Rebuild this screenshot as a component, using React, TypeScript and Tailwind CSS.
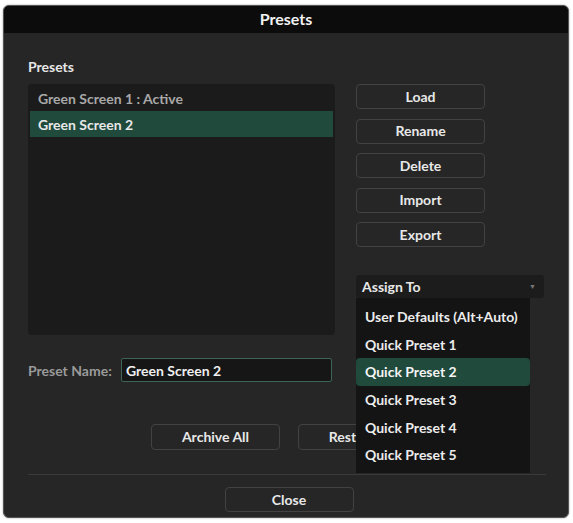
import React from 'react';

const font = { fontFamily: 'Lato, "Open Sans", "Liberation Sans", sans-serif' };

const Btn: React.FC<{ label: string; className?: string }> = ({ label, className = '' }) => (
  <button
    className={`h-[25px] w-[129px] rounded-[4px] border border-[#424242] bg-[#262626] text-[14px] font-bold leading-none text-[#e8e8e8] ${className}`}
  >
    {label}
  </button>
);

const assignItems = [
  'User Defaults (Alt+Auto)',
  'Quick Preset 1',
  'Quick Preset 2',
  'Quick Preset 3',
  'Quick Preset 4',
  'Quick Preset 5',
];

export default function App() {
  return (
    <div className="min-h-[523px] w-[573px] bg-white pl-[3px] pt-[5px]" style={font}>
      <div className="flex h-[513px] w-[566px] flex-col overflow-hidden rounded-[6px] border border-[#555] bg-[#262626] shadow-[0_0_2px_rgba(0,0,0,0.4)]">
        {/* Title bar */}
        <div className="flex h-[27px] shrink-0 items-center justify-center bg-[#0c0c0c] pb-[2px] text-[16px] font-bold text-[#f2f2f2]">
          Presets
        </div>

        <div className="flex flex-1 flex-col px-[24px] pt-[26px]">
          {/* Main row */}
          <div className="flex">
            <div className="flex w-[308px] flex-col">
              <div className="h-[16px] text-[14px] font-bold leading-[16px] text-[#e6e6e6]">Presets</div>
              <div className="mt-[9px] h-[251px] rounded-[4px] bg-[#1b1b1b] px-[2px] pt-[2px]">
                <div className="flex h-[25px] items-center pl-[8px] text-[14px] font-bold text-[#a8a8a8]">
                  Green Screen 1 : Active
                </div>
                <div className="flex h-[26px] items-center bg-[#1f4a3c] pl-[8px] text-[14px] font-bold text-[#e8e8e8]">
                  Green Screen 2
                </div>
              </div>
            </div>

            <div className="ml-[21px] flex flex-col pt-[25px]">
              <div className="flex flex-col gap-[9.5px]">
                <Btn label="Load" />
                <Btn label="Rename" />
                <Btn label="Delete" />
                <Btn label="Import" />
                <Btn label="Export" />
              </div>

              <div className="relative mt-[28px] w-[188px]">
                <div className="flex h-[23px] items-center justify-between rounded-[3px] bg-[#1c1c1c] pl-[6px] pr-[8px] text-[14px] font-bold text-[#e8e8e8]">
                  <span>Assign To</span>
                  <span className="text-[7px] text-[#777]">▼</span>
                </div>
                <div className="absolute left-0 top-[23px] z-10 w-[174px] bg-[#141414] pb-[4px] pt-[5px]">
                  {assignItems.map((it) => (
                    <div
                      key={it}
                      className={`flex h-[27.6px] items-center rounded-[4px] pl-[9px] text-[14px] font-bold text-[#ececec] ${
                        it === 'Quick Preset 2' ? 'bg-[#1f4a3c] text-[#f4f4f4]' : ''
                      }`}
                    >
                      {it}
                    </div>
                  ))}
                </div>
              </div>
            </div>
          </div>

          {/* Preset name row */}
          <div className="mt-[23px] flex h-[24px] items-center">
            <span className="w-[93px] text-[14px] font-bold text-[#9a9a9a]">Preset Name:</span>
            <div className="flex h-[24px] w-[211px] items-center rounded-[2px] border border-[#3d6456] bg-[#161616] pl-[4px] text-[14px] font-bold text-[#efefef]">
              Green Screen 2
            </div>
          </div>

          {/* Archive / Restore */}
          <div className="mt-[42px] flex justify-center gap-[18px] pl-[6px]">
            <Btn label="Archive All" className="h-[26px]" />
            <Btn label="Restore All" className="h-[26px]" />
          </div>

          <div className="mt-[24px] h-px w-[518px] bg-[#3a3a3a]" />

          <div className="mt-[12px] flex justify-center pl-[6px]">
            <Btn label="Close" className="w-[128px]" />
          </div>
        </div>
      </div>
    </div>
  );
}
